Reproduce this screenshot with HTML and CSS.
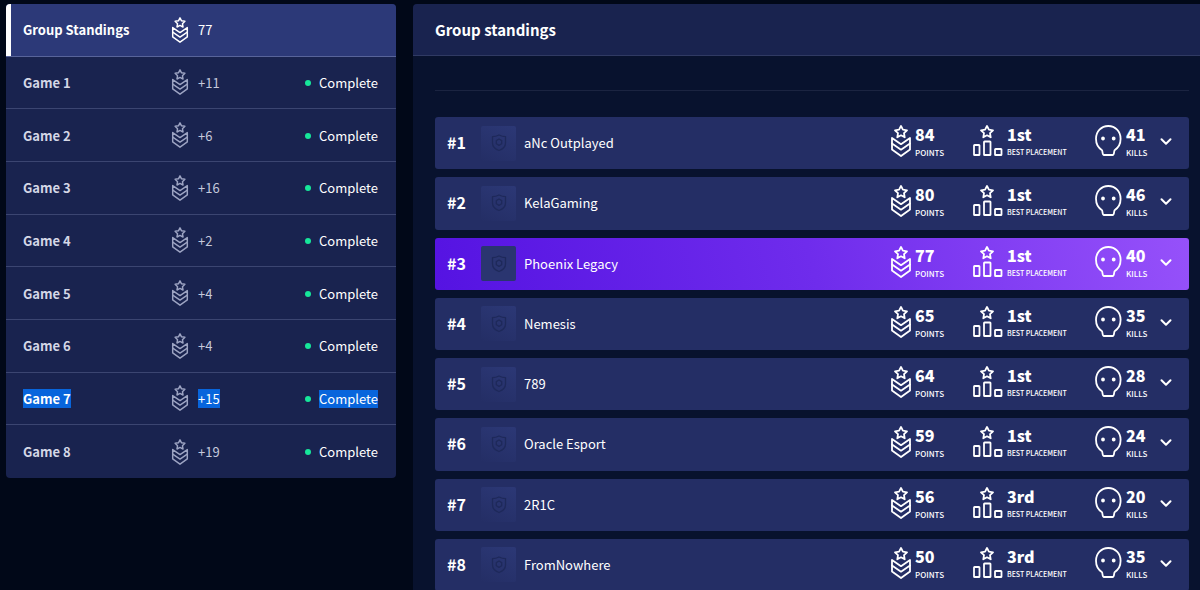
FILE: index.html
```html
<!DOCTYPE html>
<html lang="en">
<head>
    <meta charset="UTF-8">
    <meta name="viewport" content="width=device-width, initial-scale=1.0">
    <title>Group standings</title>
    <link rel="stylesheet" href="styles.css">
</head>
<body>
    <svg class="icon-defs" aria-hidden="true">
        <symbol id="icon-points" viewBox="0 0 20 32">
            <path d="M10 1l1.900 3.700 4.100.6-3 2.900.7 4.100-3.700-2-3.700 2 .7-4.100-3-2.900 4.100-.6z"/>
            <path d="M1 13l9 6.200 9-6.200v11.500L10 31l-9-6.500z"/>
            <path d="M1 18.500l9 6.200 9-6.200"/>
        </symbol>
        <symbol id="icon-placement" viewBox="0 0 30 32">
            <path d="M14 1l1.900 3.700 4.100.6-3 2.900.7 4.100-3.700-2-3.700 2 .7-4.100-3-2.900 4.100-.6z"/>
            <rect x="1" y="20" width="5.500" height="10" rx=".6"/>
            <rect x="11" y="16.500" width="6.500" height="13.500" rx=".6"/>
            <rect x="22" y="24" width="6.500" height="6" rx=".6"/>
        </symbol>
        <symbol id="icon-kills" viewBox="0 0 27 32">
            <path d="M9 30c-1.800 0-1.200-3.400-2-4.800C3.200 22.800 1 18.400 1 13.800 1 6.600 6.200 1 13.300 1s12.300 5.600 12.300 12.800c0 4.600-2.200 9-6 11.400-.8 1.400-.2 4.800-2 4.800z"/>
            <circle cx="8" cy="13.500" r="1" class="solid"/>
            <circle cx="18.700" cy="13.500" r="1" class="solid"/>
        </symbol>
        <symbol id="icon-chevron" viewBox="0 0 12 8">
            <path d="M2 2l4 4 4-4"/>
        </symbol>
        <symbol id="icon-shield" viewBox="0 0 16 18">
            <path d="M8 1c2 1 4 1.600 6.500 1.600V9c0 3.500-2.500 6-6.500 7.500C4 15 1.500 12.500 1.500 9V2.600C4 2.600 6 2 8 1z"/>
            <path d="M8 5l2.700 1.600v3.200L8 11.400 5.300 9.800V6.600z"/>
        </symbol>
    </svg>

    <div class="layout">
        <nav class="games" id="games"></nav>

        <main class="panel">
            <header class="panel-header">
                <h1>Group standings</h1>
            </header>
            <div class="panel-body">
                <hr class="divider">
                <ol class="teams" id="teams"></ol>
            </div>
        </main>
    </div>

    <script src="script.js"></script>
</body>
</html>
```

FILE: styles.css
```css
* {
    box-sizing: border-box;
}
body {
    margin: 0;
    height: 100vh;
    overflow: hidden;
    background-color: #010818;
    color: #ffffff;
    font-family: "Noto Sans CJK SC", "Open Sans", sans-serif;
    font-size: 13px;
    line-height: 18px;
}
svg {
    display: block;
    flex: none;
    fill: none;
    stroke: currentColor;
    stroke-width: 1.8;
    stroke-linejoin: round;
    stroke-linecap: round;
}
.icon-defs {
    position: absolute;
    width: 0;
    height: 0;
}
.solid {
    fill: currentColor;
}
.layout {
    display: grid;
    grid-template-columns: minmax(300px, 390px) 1fr;
    gap: 17px;
    align-items: start;
    min-height: 100vh;
    padding: 4px 0 0 6px;
}

/* game list */
.games {
    display: grid;
    grid-auto-rows: 1fr;
    min-height: 474px;
    border-radius: 4px;
    overflow: hidden;
    background-color: #19234f;
}
.game {
    display: grid;
    grid-template-columns: 148px 27px 1fr auto;
    align-items: center;
    padding: 0 18px 0 17px;
    border-bottom: 1px solid #3b4571;
    color: #ffffff;
    text-decoration: none;
}
.game:last-child {
    border-bottom: none;
}
.game.active {
    background-color: #2c3978;
    border-bottom-color: #58649a;
    box-shadow: inset 5px 0 0 #ffffff;
}
.game-name,
.game-points,
.game-status {
    padding-top: 1px;
}
.game-name {
    font-weight: bold;
    color: #d4d7e6;
}
.game svg {
    width: 18px;
    height: 26px;
    color: #9ca3c2;
}
.game-points {
    color: #c5c9dc;
}
.game.active .game-name,
.game.active .game-points,
.game.active svg {
    color: #ffffff;
}
.game-status {
    display: flex;
    align-items: center;
    gap: 8px;
}
.game-status::before {
    content: "";
    width: 6px;
    height: 6px;
    border-radius: 50%;
    background-color: #16e69a;
}
.game.selected .text {
    background-color: #0865dc;
    color: #ffffff;
}

/* standings */
.panel {
    min-height: calc(100vh - 4px);
    border-radius: 4px 0 0 0;
    overflow: hidden;
    background-color: #08122e;
}
.panel-header {
    padding: 14px 22px 13px;
    border-bottom: 1px solid #303a63;
    background-color: #19234f;
}
.panel-header h1 {
    margin: 0;
    font-size: 15px;
    line-height: 24px;
}
.panel-body {
    padding: 34px 11px 22px 22px;
}
.divider {
    margin: 0 0 26px;
    border: none;
    border-top: 1px solid #1b2441;
}
.teams {
    display: grid;
    grid-auto-rows: 1fr;
    gap: 8px;
    min-height: 474px;
    margin: 0;
    padding: 0;
    list-style: none;
}
.team {
    display: grid;
    grid-template-columns: 34px 35px 1fr 82px 122px 64px 14px;
    align-items: center;
    padding: 0 16px 0 12px;
    border-radius: 3px;
    background-color: #242e65;
}
.team.own {
    background: linear-gradient(75deg, #5513e2, #6f2cec 50%, #9651fa);
}
.rank {
    padding-bottom: 2px;
    font-size: 16px;
    font-weight: bold;
}
.logo {
    display: flex;
    align-items: center;
    justify-content: center;
    width: 35px;
    height: 35px;
    border-radius: 2px;
    background: linear-gradient(25deg, #242e65, #2c3876);
    color: #1e295a;
}
.own .logo {
    background: #2a3570;
}
.logo svg {
    width: 16px;
    height: 18px;
    stroke-width: 1.3;
}
.team-name {
    padding-left: 8px;
}
.stat {
    display: flex;
    align-items: center;
    gap: 4px;
}
.stat svg {
    height: 32px;
    margin-bottom: 4px;
}
.stat-points svg {
    width: 20px;
}
.stat-placement svg {
    width: 30px;
}
.stat-kills svg {
    width: 27px;
}
.stat-value {
    display: block;
    font-size: 16px;
    font-weight: 900;
    line-height: 19px;
}
.stat-label {
    display: block;
    font-size: 8px;
    font-weight: 500;
    line-height: 17px;
    text-transform: uppercase;
    white-space: nowrap;
}
.stat-placement .stat-label {
    font-size: 7px;
}
.expand {
    padding: 0 0 3px;
    border: none;
    background: none;
    color: #ffffff;
    cursor: pointer;
}
.expand svg {
    width: 14px;
    height: 9px;
}
```

FILE: script.js
```js
const games = [
    { name: 'Group Standings', points: '77', active: true },
    { name: 'Game 1', points: '+11' },
    { name: 'Game 2', points: '+6' },
    { name: 'Game 3', points: '+16' },
    { name: 'Game 4', points: '+2' },
    { name: 'Game 5', points: '+4' },
    { name: 'Game 6', points: '+4' },
    { name: 'Game 7', points: '+15', selected: true },
    { name: 'Game 8', points: '+19' }
];

const teams = [
    { name: 'aNc Outplayed', points: 84, best: '1st', kills: 41 },
    { name: 'KelaGaming', points: 80, best: '1st', kills: 46 },
    { name: 'Phoenix Legacy', points: 77, best: '1st', kills: 40, own: true },
    { name: 'Nemesis', points: 65, best: '1st', kills: 35 },
    { name: '789', points: 64, best: '1st', kills: 28 },
    { name: 'Oracle Esport', points: 59, best: '1st', kills: 24 },
    { name: '2R1C', points: 56, best: '3rd', kills: 20 },
    { name: 'FromNowhere', points: 50, best: '3rd', kills: 35 }
];

function icon(name) {
    return `<svg aria-hidden="true"><use href="#icon-${name}"/></svg>`;
}

function stat(type, value, label) {
    return `<div class="stat stat-${type}">${icon(type)}
        <div><span class="stat-value">${value}</span><span class="stat-label">${label}</span></div>
    </div>`;
}

document.getElementById('games').innerHTML = games.map(game => `
    <a href="#" class="game${game.active ? ' active' : ''}${game.selected ? ' selected' : ''}">
        <span class="game-name"><span class="text">${game.name}</span></span>
        ${icon('points')}
        <span class="game-points"><span class="text">${game.points}</span></span>
        ${game.active ? '' : '<span class="game-status"><span class="text">Complete</span></span>'}
    </a>`).join('');

document.getElementById('teams').innerHTML = teams.map((team, i) => `
    <li class="team${team.own ? ' own' : ''}">
        <span class="rank">#${i + 1}</span>
        <span class="logo">${icon('shield')}</span>
        <span class="team-name">${team.name}</span>
        ${stat('points', team.points, 'Points')}
        ${stat('placement', team.best, 'Best placement')}
        ${stat('kills', team.kills, 'Kills')}
        <button class="expand" aria-label="Show details for ${team.name}">${icon('chevron')}</button>
    </li>`).join('');
```
